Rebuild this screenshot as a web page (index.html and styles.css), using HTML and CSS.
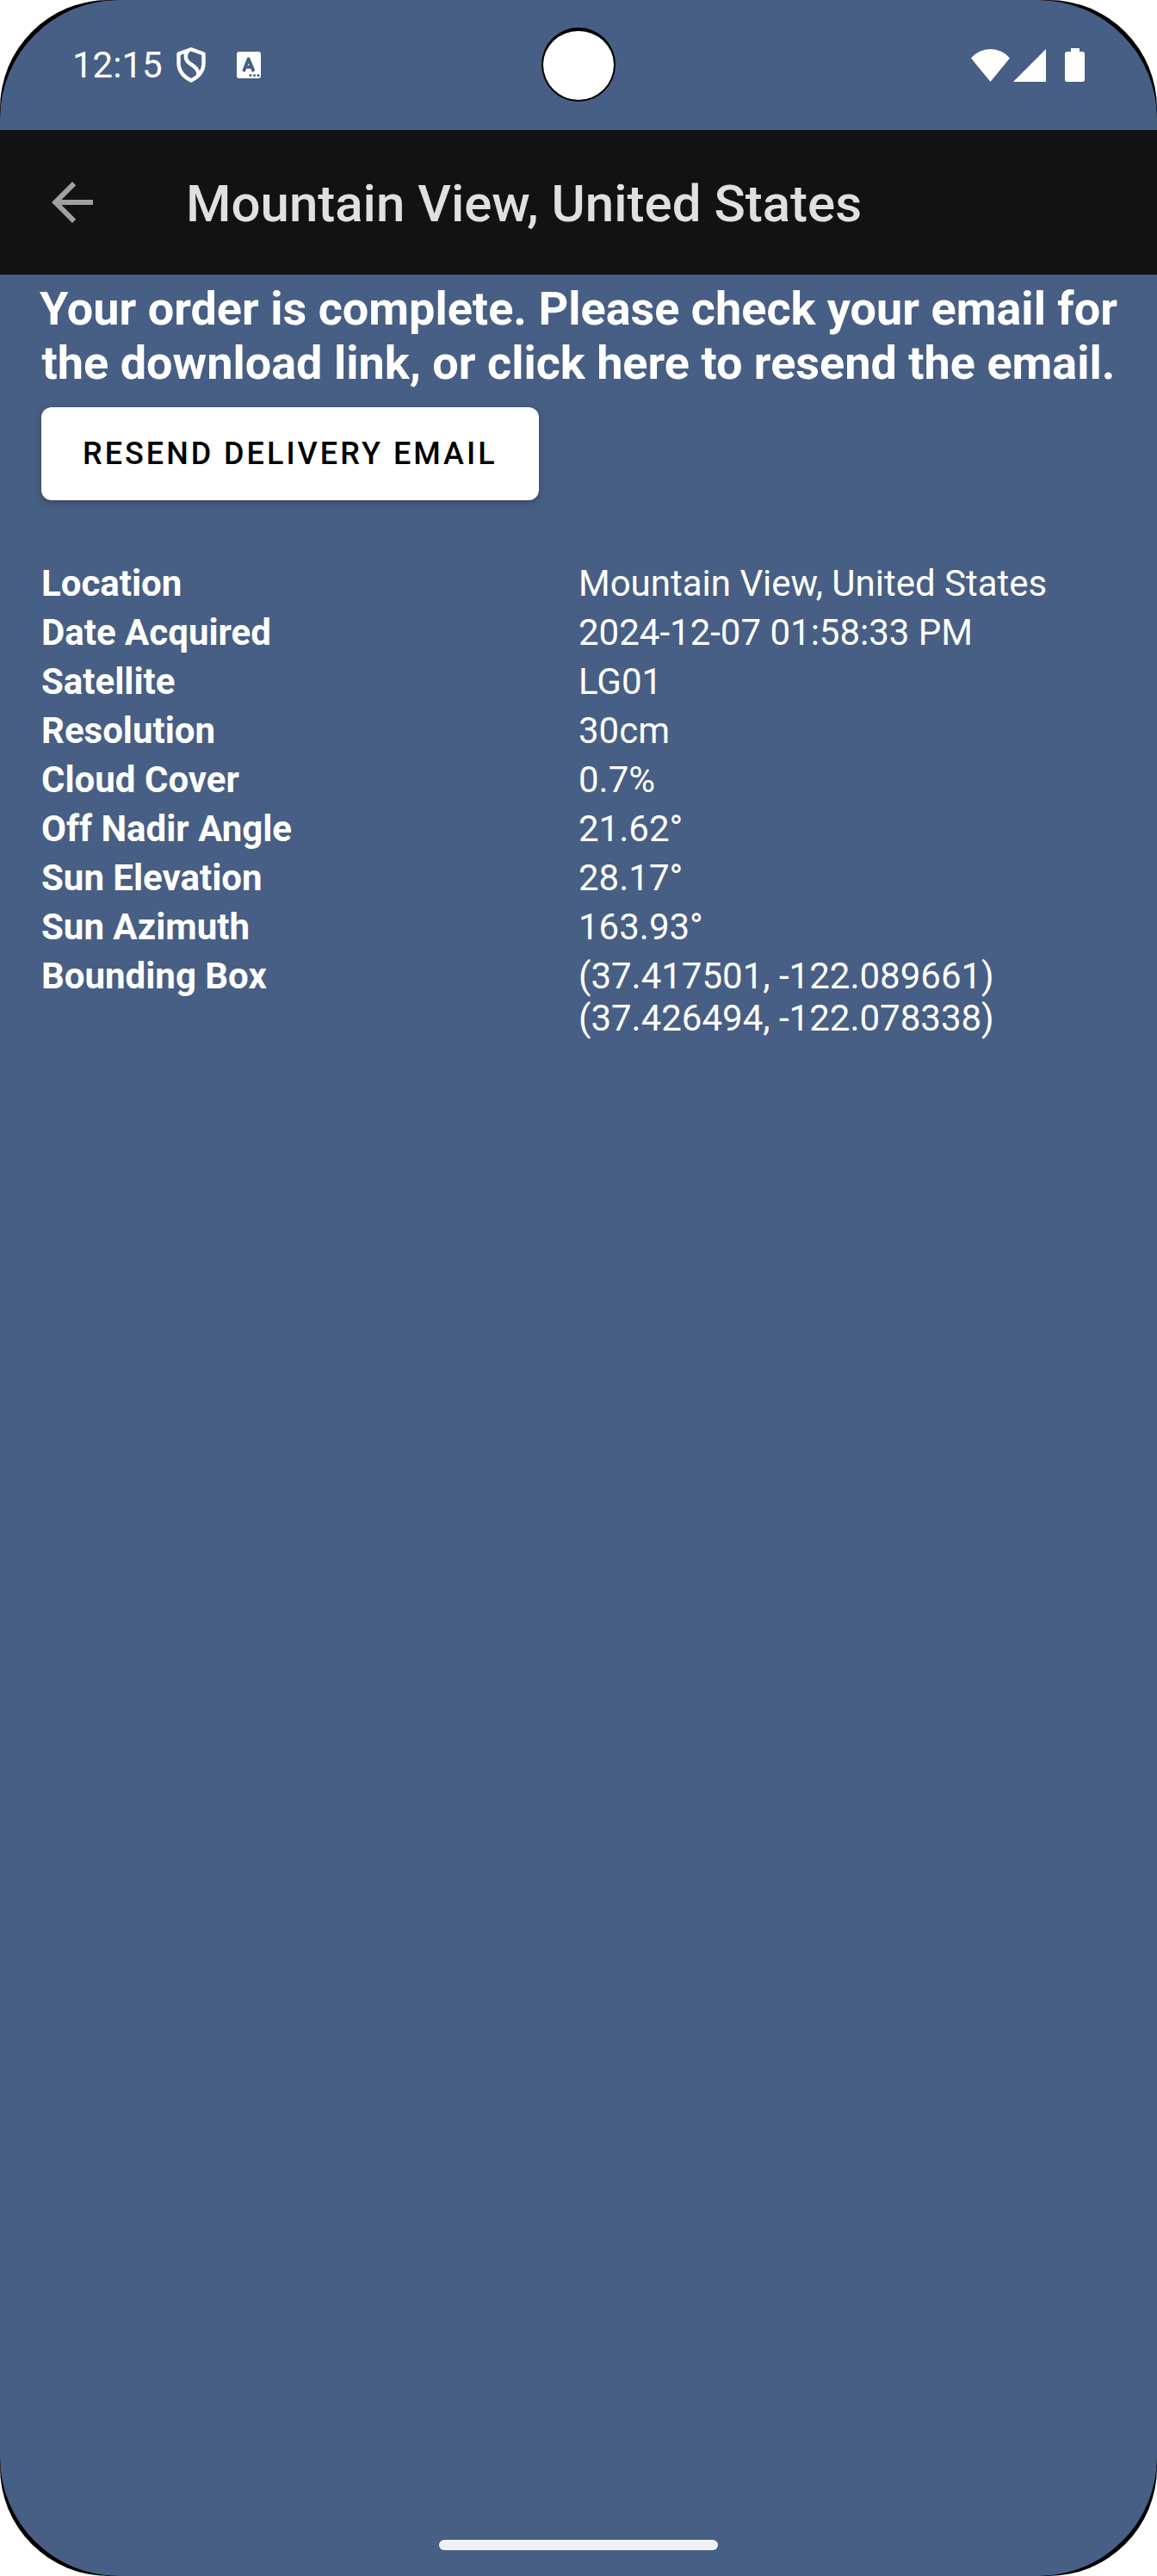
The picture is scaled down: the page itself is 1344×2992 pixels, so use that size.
FILE: index.html
```
<!DOCTYPE html>
<html lang="en">
	<head>
		<meta charset="UTF-8">
		<meta name="viewport" content="width=device-width, initial-scale=1">
		<title>Mountain View, United States</title>
		<link rel="stylesheet" href="styles.css">
	</head>
	<body>
		<div class="frame">
			<div class="screen">
				<div class="status_bar">
					<div class="status_left">
						<span class="clock">12:15</span>
						<svg class="icon_shield" viewBox="0 0 34 41" width="34" height="41">
							<path d="M17 2.300L31.500 7.500V18C31.500 27 26 34 17 38.500C8 34 2.500 27 2.500 18V7.500Z" fill="none" stroke="#fff" stroke-width="4.400" stroke-linejoin="round"/>
							<path d="M13.500 4C9.500 8 10 14.500 14.500 18C20 22 25.500 24.500 25.500 32" fill="none" stroke="#fff" stroke-width="4.400"/>
						</svg>
						<svg class="icon_a" viewBox="0 0 28 31" width="28" height="31">
							<rect width="28" height="31" rx="3" fill="#fff"/>
							<path d="M8.500 21.500L13.700 8.500L19 21.500M10.500 17.800H17" fill="none" stroke="#475f84" stroke-width="3.800" stroke-linecap="round" stroke-linejoin="round"/>
							<circle cx="16" cy="27.500" r="1.500" fill="#475f84"/>
							<circle cx="20.500" cy="27.500" r="1.500" fill="#475f84"/>
							<circle cx="25" cy="27.500" r="1.500" fill="#475f84"/>
						</svg>
					</div>
					<div class="status_right">
						<svg viewBox="0 0 45 38" width="45" height="38">
							<path d="M0 10.500Q9 0 22.500 0Q36 0 45 10.500L22.500 38Z" fill="#fff"/>
						</svg>
						<svg viewBox="0 0 38 38" width="38" height="38">
							<path d="M38 0V38H0Z" fill="#fff"/>
						</svg>
						<svg class="icon_battery" viewBox="0 0 23 39" width="23" height="39">
							<path d="M7 0H17V4H20.500Q23 4 23 6.500V36.500Q23 39 20.500 39H2.500Q0 39 0 36.500V6.500Q0 4 2.500 4H7Z" fill="#fff"/>
						</svg>
					</div>
					<div class="camera"></div>
				</div>
				<header class="app_bar">
					<button type="button" class="back" aria-label="Back">
						<svg viewBox="0 0 24 24" width="72" height="72">
							<path d="M20 11H7.830L13.420 5.410L12 4L4 12L12 20L13.410 18.590L7.830 13H20Z" fill="#a0a0a0"/>
						</svg>
					</button>
					<h1 class="title">Mountain View, United States</h1>
				</header>
				<main class="content">
					<p class="message">Your order is complete. Please check your email for the download link, or click here to resend the email.</p>
					<button type="button" class="resend">RESEND DELIVERY EMAIL</button>
					<table class="details">
						<tr>
							<th scope="row">Location</th>
							<td>Mountain View, United States</td>
						</tr>
						<tr>
							<th scope="row">Date Acquired</th>
							<td>2024-12-07 01:58:33 PM</td>
						</tr>
						<tr>
							<th scope="row">Satellite</th>
							<td>LG01</td>
						</tr>
						<tr>
							<th scope="row">Resolution</th>
							<td>30cm</td>
						</tr>
						<tr>
							<th scope="row">Cloud Cover</th>
							<td>0.7%</td>
						</tr>
						<tr>
							<th scope="row">Off Nadir Angle</th>
							<td>21.62°</td>
						</tr>
						<tr>
							<th scope="row">Sun Elevation</th>
							<td>28.17°</td>
						</tr>
						<tr>
							<th scope="row">Sun Azimuth</th>
							<td>163.93°</td>
						</tr>
						<tr>
							<th scope="row">Bounding Box</th>
							<td>(37.417501, -122.089661)<br>(37.426494, -122.078338)</td>
						</tr>
					</table>
				</main>
				<div class="home_bar"></div>
			</div>
		</div>
	</body>
</html>
```

FILE: styles.css
```
*{
	padding: 0;
	margin: 0;
	box-sizing: border-box;
}
body{
	background: #fff;
	color: #fff;
	font-family: Roboto, sans-serif;
	font-size: 42px;
	line-height: 49px;
}
svg{
	display: block;
}
.frame{
	background: #000;
	border-radius: 126px;
}
.screen{
	display: flex;
	flex-direction: column;
	min-height: 100vh;
	background: #475f84;
	border-radius: 138px;
}
.status_bar{
	position: relative;
	display: flex;
	justify-content: space-between;
	align-items: center;
	height: 151px;
	padding: 0 84px;
}
.status_left,
.status_right{
	display: flex;
	align-items: center;
}
.icon_shield{
	margin-left: 16px;
}
.icon_a{
	margin-left: 36px;
}
.status_right{
	gap: 4px;
}
.icon_battery{
	margin-left: 18px;
}
/* punch-hole camera over the status bar */
.camera{
	position: absolute;
	left: 50%;
	top: 32px;
	width: 86px;
	height: 86px;
	margin-left: -43px;
	border: 2px solid #000;
	border-top-width: 4px;
	border-radius: 50%;
	background: #fff;
}
.app_bar{
	display: flex;
	align-items: center;
	height: 168px;
	padding: 0 48px;
	background: #121212;
}
.back{
	border: none;
	background: none;
	cursor: pointer;
}
.title{
	margin-left: 96px;
	padding-top: 4px;
	font-size: 60px;
	font-weight: 500;
	line-height: 72px;
	color: #e0e0e0;
}
.content{
	flex: 1;
	padding: 8px 48px;
}
.message{
	margin: 0 -24px 20px;
	font-size: 54px;
	font-weight: bold;
	line-height: 63px;
	text-align: center;
}
.resend{
	display: block;
	height: 108px;
	padding: 0 48px;
	border: none;
	border-radius: 12px;
	background: #fff;
	box-shadow: 0 3px 8px rgba(0, 0, 0, 0.25);
	font-family: inherit;
	font-size: 36px;
	font-weight: 500;
	letter-spacing: 3px;
	color: #000;
	cursor: pointer;
}
.details{
	width: 100%;
	margin-top: 72px;
	table-layout: fixed;
	border-collapse: collapse;
}
.details th,
.details td{
	padding-bottom: 8px;
	text-align: left;
	vertical-align: top;
}
.home_bar{
	width: 324px;
	height: 12px;
	margin: 0 auto 30px;
	border-radius: 6px;
	background: #f0f1f5;
}
```
